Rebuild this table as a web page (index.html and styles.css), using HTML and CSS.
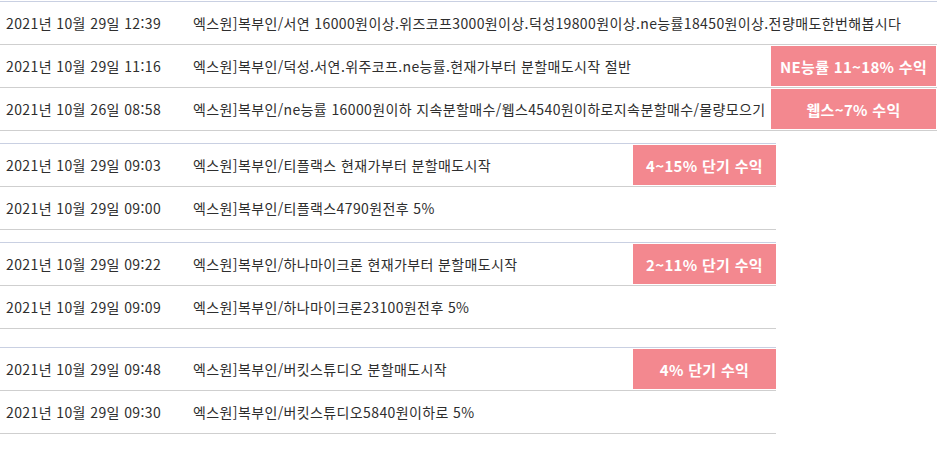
FILE: index.html
```html
<!DOCTYPE html>
<html lang="ko">
<head>
<meta charset="utf-8">
<link rel="stylesheet" href="styles.css">
</head>
<body>
<div class="board board--wide">
  <div class="row">
    <div class="date">2021년 10월 29일 12:39</div>
    <div class="title">엑스원]복부인/서연 16000원이상.위즈코프3000원이상.덕성19800원이상.ne능률18450원이상.전량매도한번해봅시다</div>
    <div class="tag"></div>
  </div>
  <div class="row">
    <div class="date">2021년 10월 29일 11:16</div>
    <div class="title">엑스원]복부인/덕성.서연.위주코프.ne능률.현재가부터 분할매도시작 절반</div>
    <div class="tag"><span class="badge">NE능률 11~18% 수익</span></div>
  </div>
  <div class="row">
    <div class="date">2021년 10월 26일 08:58</div>
    <div class="title">엑스원]복부인/ne능률 16000원이하 지속분할매수/웹스4540원이하로지속분할매수/물량모으기</div>
    <div class="tag"><span class="badge">웹스~7% 수익</span></div>
  </div>
</div>

<div class="board">
  <div class="row">
    <div class="date">2021년 10월 29일 09:03</div>
    <div class="title">엑스원]복부인/티플랙스 현재가부터 분할매도시작</div>
    <div class="tag"><span class="badge">4~15% 단기 수익</span></div>
  </div>
  <div class="row">
    <div class="date">2021년 10월 29일 09:00</div>
    <div class="title">엑스원]복부인/티플랙스4790원전후 5%</div>
    <div class="tag"></div>
  </div>
</div>

<div class="board">
  <div class="row">
    <div class="date">2021년 10월 29일 09:22</div>
    <div class="title">엑스원]복부인/하나마이크론 현재가부터 분할매도시작</div>
    <div class="tag"><span class="badge">2~11% 단기 수익</span></div>
  </div>
  <div class="row">
    <div class="date">2021년 10월 29일 09:09</div>
    <div class="title">엑스원]복부인/하나마이크론23100원전후 5%</div>
    <div class="tag"></div>
  </div>
</div>

<div class="board board--far">
  <div class="row">
    <div class="date">2021년 10월 29일 09:48</div>
    <div class="title">엑스원]복부인/버킷스튜디오 분할매도시작</div>
    <div class="tag"><span class="badge">4% 단기 수익</span></div>
  </div>
  <div class="row">
    <div class="date">2021년 10월 29일 09:30</div>
    <div class="title">엑스원]복부인/버킷스튜디오5840원이하로 5%</div>
    <div class="tag"></div>
  </div>
</div>
</body>
</html>
```

FILE: styles.css
```css
html, body {
  margin: 0;
  padding: 0;
  background: #fff;
}
body {
  padding-top: 1px;
  font-family: "Noto Sans CJK KR", "Noto Sans", sans-serif;
  font-size: 14px;
  color: #2e2e2e;
  overflow: hidden;
}
.board {
  width: 776px;
  border-top: 1px solid #c9d0e2;
  margin-top: 12px;
}
.board--wide {
  width: 937px;
  margin-top: 0;
}
.board--far {
  margin-top: 18px;
}
.row {
  display: grid;
  grid-template-columns: 193px minmax(0, 1fr) 143px;
  height: 42px;
  border-bottom: 1px solid #cfcfcf;
  align-items: center;
}
.board--wide .row {
  grid-template-columns: 193px minmax(0, 1fr) 166px;
}
.date {
  padding-left: 6px;
  white-space: nowrap;
  letter-spacing: 0.4px;
}
.title {
  white-space: nowrap;
  letter-spacing: 0.38px;
}
.tag {
  height: 100%;
  padding: 1px 1px 1px 0;
  box-sizing: border-box;
}
.board:not(.board--wide) .tag {
  padding-right: 0;
}
.badge {
  display: flex;
  align-items: center;
  justify-content: center;
  height: 100%;
  background: #f3888f;
  color: #fff;
  font-weight: bold;
  font-size: 15px;
  letter-spacing: 0.3px;
}
```
